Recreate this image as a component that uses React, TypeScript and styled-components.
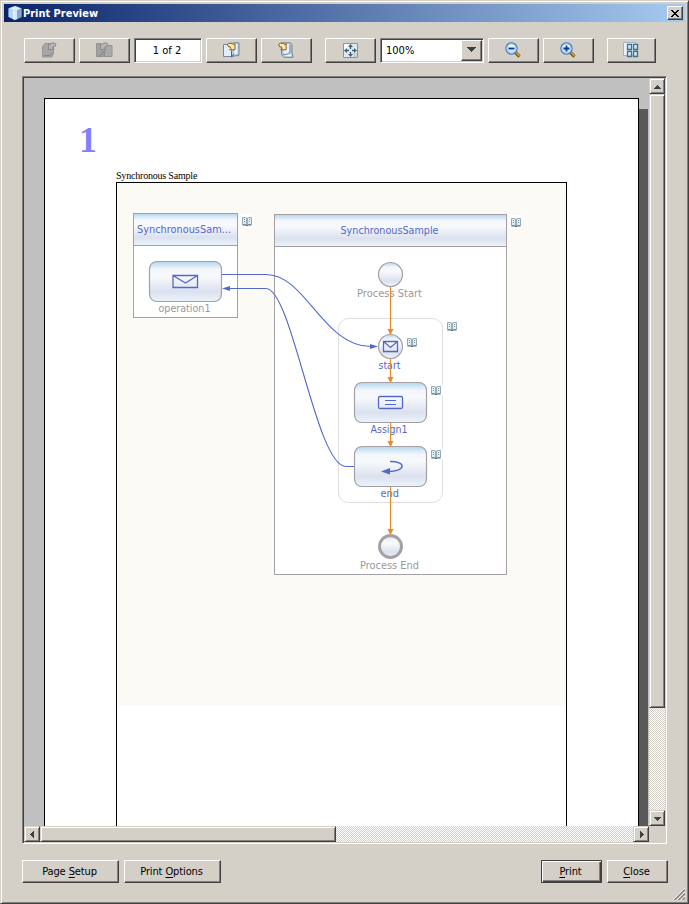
import React from 'react';
import styled, { createGlobalStyle, css } from 'styled-components';

const face = '#d4d0c8';
const ui = '"DejaVu Sans Condensed", "DejaVu Sans", "Noto Sans", sans-serif';
const blue = '#5468cc';
const orange = '#e78b24';
const edge = '#a5a0a6';

const Global = createGlobalStyle`
  *, *::before, *::after { box-sizing: border-box; }
  body { margin: 0; background: ${face}; overflow: hidden; }
  svg { display: block; }
`;

const raised = css`
  border: 1px solid;
  border-color: #fff #404040 #404040 #fff;
  box-shadow: inset -1px -1px 0 #808080;
`;
const sunken = css`
  border: 1px solid;
  border-color: #808080 #fff #fff #808080;
  box-shadow: inset 1px 1px 0 #404040, inset -1px -1px 0 ${face};
`;

const Dialog = styled.div`
  width: 689px;
  height: 904px;
  padding: 2px 2px 0 2px;
  background: ${face};
  border: 1px solid;
  border-color: ${face} #404040 #404040 ${face};
  box-shadow: inset 1px 1px 0 #fff, inset -1px -1px 0 #808080;
  font: 11px ${ui};
  color: #000;
  display: flex;
  flex-direction: column;
`;

const TitleBar = styled.header`
  height: 18px;
  margin: 1px 1px 0;
  padding: 0 2px 0 4px;
  display: flex;
  align-items: center;
  background: linear-gradient(90deg, #0a246a, #a6caf0);
  color: #fff;
`;

const Title = styled.div`
  flex: 1;
  margin-left: 1px;
  font-weight: bold;
  font-size: 11px;
  line-height: 18px;
  svg { overflow: visible; }
`;

const CloseBox = styled.button`
  ${raised}
  width: 16px;
  height: 14px;
  padding: 0;
  background: ${face};
  display: grid;
  place-items: center;
`;

const Toolbar = styled.div`
  margin: 16px 0 0 21px;
  height: 25px;
  display: flex;
  gap: 4px;
`;

const ToolButton = styled.button<{ $w?: number; $before?: number }>`
  border: 1px solid;
  border-color: #fff #404040 #404040 #fff;
  box-shadow: inset -1px -1px 0 #808080;
  width: ${(p) => p.$w ?? 51}px;
  height: 25px;
  margin-left: ${(p) => p.$before ?? 0}px;
  padding: 0 1px 1px 0;
  background: ${face};
  display: grid;
  place-items: center;
`;

const PageField = styled.div`
  ${sunken}
  width: 68px;
  height: 25px;
  padding-right: 2px;
  background: #fff;
  display: grid;
  place-items: center;
  line-height: 20px;
`;

const Combo = styled.div`
  ${sunken}
  width: 104px;
  height: 25px;
  padding: 0 1px 0 5px;
  background: #fff;
  display: flex;
  align-items: center;
  justify-content: space-between;
`;

const ComboArrow = styled.div`
  ${raised}
  width: 21px;
  height: 21px;
  padding-bottom: 2px;
  background: ${face};
  display: grid;
  place-items: center;
`;

const ScrollPane = styled.main`
  ${sunken}
  width: 645px;
  height: 768px;
  margin: 13px 0 0 19px;
  padding: 1px;
  display: grid;
  grid-template-columns: 625px 16px;
  grid-template-rows: 748px 16px;
  background: ${face};
`;

const Viewport = styled.div`
  overflow: hidden;
  background: #c0c0c0;
`;

const Paper = styled.article`
  width: 595px;
  height: 842px;
  margin: 20px 0 0 20px;
  padding: 26px 0 0 71px;
  border: 1px solid #000;
  background: #fff;
  box-shadow: 9px 11px 0 #595959;
`;

const PageNumber = styled.div`
  margin-left: -37px;
  height: 30px;
  font: bold 36px/30px "Liberation Serif", serif;
  color: #8080ff;
`;

const DocName = styled.div`
  height: 27px;
  padding-top: 15px;
  font: 10px/12px "Liberation Serif", serif;
  letter-spacing: -0.2px;
  white-space: nowrap;
`;

const Frame = styled.div`
  width: 451px;
  height: 700px;
  border: 1px solid #000;
`;

const Track = styled.div<{ $dir: 'row' | 'column' }>`
  display: flex;
  flex-direction: ${(p) => p.$dir};
  justify-content: space-between;
  background: repeating-conic-gradient(${face} 0 25%, #fff 0 50%) 0 0 / 2px 2px;
`;

const ThumbGroup = styled.div<{ $dir: 'row' | 'column' }>`
  display: flex;
  flex-direction: ${(p) => p.$dir};
`;

const scrollPart = css`
  border: 1px solid;
  border-color: ${face} #404040 #404040 ${face};
  box-shadow: inset 1px 1px 0 #fff, inset -1px -1px 0 #808080;
  background: ${face};
`;

const Arrow = styled.div`
  ${scrollPart}
  width: 16px;
  height: 16px;
  display: grid;
  place-items: center;
`;

const Thumb = styled.div<{ $w: number; $h: number }>`
  ${scrollPart}
  width: ${(p) => p.$w}px;
  height: ${(p) => p.$h}px;
`;

const Footer = styled.footer`
  height: 23px;
  margin: 16px 18px 0 19px;
  display: flex;
  justify-content: space-between;
`;

const Group = styled.div`
  display: flex;
  gap: 5px;
`;

const PushButton = styled.button<{ $w: number; $default?: boolean }>`
  ${raised}
  ${(p) =>
    p.$default &&
    css`
      border-color: #404040;
      box-shadow: inset 1px 1px 0 #fff, inset -1px -1px 0 #404040, inset -2px -2px 0 #808080;
    `}
  width: ${(p) => p.$w}px;
  height: 23px;
  padding: 1px 2px 0 0;
  background: ${face};
  color: #000;
  font: 11px/20px ${ui};
  letter-spacing: -0.12px;
  white-space: nowrap;
  u { text-underline-offset: 2px; text-decoration-thickness: 1px; }
`;

const GripRow = styled.div`
  height: 13px;
  margin-top: 5px;
  padding-right: 1px;
  display: flex;
  justify-content: flex-end;
`;

type Direction = 'up' | 'down' | 'left' | 'right';

const triangles: Record<Direction, string> = {
  up: 'M5 4h1v1h1v1h1v1h1v1H2V7h1V6h1V5h1z',
  down: 'M2 4h7v1H8v1H7v1H6v1H5V7H4V6H3V5H2z',
  left: 'M7 2v7H6V8H5V7H4V6H3V5h1V4h1V3h1V2z',
  right: 'M4 2v7h1V8h1V7h1V6h1V5H7V4H6V3H5V2z',
};

function Triangle({ dir }: { dir: Direction }) {
  return (
    <svg width="11" height="11" viewBox="0 0 11 11" shapeRendering="crispEdges">
      <path d={triangles[dir]} fill="#404040" />
    </svg>
  );
}

function ComboTriangle() {
  return (
    <svg width="9" height="5" viewBox="0 0 9 5" shapeRendering="crispEdges">
      <path d="M0 0h9v1H8v1H7v1H6v1H5v1H4V4H3V3H2V2H1V1H0z" fill="#404040" />
    </svg>
  );
}

function Cube() {
  return (
    <svg width="14" height="16" viewBox="0 0 14 16">
      <path d="M7 .8 13.600 3.300v8.700L7 15.200.4 12V3.300z" fill="#8fb0d8" />
      <path d="M7 1.200 13 3.500 7 6 1 3.500z" fill="#d9eefa" />
      <path d="M.8 3.800 7 6v8.800L.8 11.800z" fill="#b4d6f4" />
      <path d="M7 6l6.200-2.200v8L7 14.800z" fill="#8ba6d2" />
      <path d="M5 5.300l2 .7 2-.7v8.600l-2 .9-2-.9z" fill="#eef9ff" opacity=".75" />
    </svg>
  );
}

const pointer = 'M.5 1.500 2 .5h3l1.500 1.500L8 1v6H2.500L4 5.500 3 4H1.500z';

function FirstPageIcon() {
  return (
    <svg width="16" height="16" viewBox="0 0 16 16">
      <path d="M1.500 15V4.500L4 1.500h8.500v9.500l-1.500 4z" fill="#a6a6a6" stroke="#979797" />
      <path d="M3 13.500h5.500l3-2.500" fill="none" stroke="#858585" />
      <path d={pointer} transform="translate(15.500 .5) scale(-1 1)" fill="#b4b4b4" stroke="#8a8a8a" />
    </svg>
  );
}

function PrevPageIcon() {
  return (
    <svg width="17" height="16" viewBox="0 0 17 16">
      <path d="M.5 1.500h4l2.500 2v11H.5z" fill="#a2a2a2" stroke="#949494" />
      <path d="M8.500 3.500h7.500v11H8.500z" fill="#a9a9a9" stroke="#949494" />
      <path d="M1.500 14.500 5 13l3-4v6" fill="none" stroke="#858585" />
      <path d={pointer} transform="translate(12.500 .5) scale(-1 1)" fill="#b4b4b4" stroke="#8a8a8a" />
    </svg>
  );
}

function NextPageIcon() {
  return (
    <svg width="17" height="16" viewBox="0 0 17 16">
      <path d="M.5 2.500h8v12h-8z" fill="#e3eef8" stroke="#71879b" />
      <path d="M8.500 3 10 .8h6v12.700l-5 .5-2.500 1z" fill="#b5cce0" stroke="#71879b" />
      <path d="M12 1.800h2.500v9.700L11 12.500z" fill="#e6f1fa" />
      <path d="M8.500 9.500v5.500l2.500-3" fill="none" stroke="#4f6376" />
      <path d={pointer} transform="translate(4 .8)" fill="#ffe7a5" stroke="#80602a" />
    </svg>
  );
}

function LastPageIcon() {
  return (
    <svg width="16" height="16" viewBox="0 0 16 16">
      <path d="M3.500.800h9l1.500 2v8l1.200 4.500H6l-2.500-3z" fill="#b1c8dc" stroke="#71879b" />
      <path d="M5.500 2h5.500v8L9 11.500H5.500z" fill="#e7f2fa" />
      <path d="M5 14.300h8.500v-2l-4.500.5z" fill="#edf5fb" />
      <path d="M5 12.500h4l3-2V3" fill="none" stroke="#8399ac" />
      <path d={pointer} transform="translate(.2 .8)" fill="#ffe7a5" stroke="#80602a" />
    </svg>
  );
}

function FitIcon() {
  return (
    <svg width="15" height="15" viewBox="0 0 15 15">
      <path d="M.5.500h14v14H.5z" fill="#dfe9f3" stroke="#8494a6" />
      <path d="M1 1h5v3L4 6H1z" fill="#fafdff" />
      <path d="M10 10h4v4h-4z" fill="#c3d3e2" />
      <path d="M7.500 1 10 4H8.200v2H6.800V4H5zM7.500 14 10 11H8.200V9H6.800v2H5zM1 7.500 4 5v1.800h2v1.400H4V10zM14 7.500 11 5v1.800H9v1.400h2V10z" fill="#46627a" />
    </svg>
  );
}

function ZoomIcon({ plus }: { plus?: boolean }) {
  return (
    <svg width="16" height="16" viewBox="0 0 16 16">
      <path d="M10.500 10.500l4 4" stroke="#765019" strokeWidth="3.200" />
      <path d="M10.800 10.200l3.700 3.700" stroke="#e0a52c" strokeWidth="1.500" />
      <circle cx="6.500" cy="6.500" r="5.600" fill="#cfe6ff" stroke="#3f78c0" strokeWidth="1.200" />
      <circle cx="6.500" cy="6.500" r="4.500" fill="none" stroke="#a7cdf5" />
      <path d="M3 5.500a3.600 3.600 0 0 1 7 0z" fill="#f6fbff" />
      <path d={plus ? 'M3.500 6.500h6M6.500 3.500v6' : 'M3.500 6.500h6'} stroke="#0f3690" strokeWidth="1.800" />
    </svg>
  );
}

function MultiPageIcon() {
  return (
    <svg width="16" height="16" viewBox="0 0 16 16">
      <path d="M.5.500h12v13H.5z" fill="#e9f1fa" stroke="#9fb2c8" />
      <path d="M4.500 2.500h4v5h-4zM10.500 2.500h4v5h-4zM4.500 9.500h4v5h-4zM10.500 9.500h4v5h-4z" fill="#c3e4f3" stroke="#44718a" strokeWidth="1.300" />
      <path d="M5.500 4h2M11.500 4h2M5.500 11h2M11.500 11h2" stroke="#f0fbff" />
    </svg>
  );
}

function Book({ x, y }: { x: number; y: number }) {
  return (
    <g transform={`translate(${x} ${y})`}>
      <rect x="-2" y="-3" width="14" height="14" rx="3" fill="#fff" />
      <path d="M.5.500h3L5 1.500 6.500.500h3v7h-3L5 8.500 3.500 7.500h-3z" fill="#e0edf1" stroke="#93a8b3" />
      <path d="M5 1.500v7M.5 8h3l1.500.8L6.500 8h3" fill="none" stroke="#566e80" />
      <path d="M2 2.500h1M2 4.500h1M7 2.500h1M7 4.500h1" stroke="#8097a3" />
    </g>
  );
}

function Label({ x, y, w, color = blue, children }: {
  x: number; y: number; w: number; color?: string; children: string;
}) {
  return (
    <text x={x} y={y} textLength={w} lengthAdjust="spacingAndGlyphs" fill={color} fontSize="11">
      {children}
    </text>
  );
}

function Activity({ x, y }: { x: number; y: number }) {
  return <rect x={x} y={y} width="72" height="40" rx="7.500" fill="url(#node)" stroke={edge} strokeWidth="1.200" />;
}

function Flow({ y1, y2 }: { y1: number; y2: number }) {
  return (
    <>
      <path d={`M390.500 ${y1}V${y2}`} stroke={orange} strokeWidth="1.200" />
      <path d={`M387.500 ${y2 - 5}h6l-3 6z`} fill={orange} />
    </>
  );
}

function ProcessDiagram() {
  return (
    <svg width="449" height="523" viewBox="117 183 449 523" fontFamily={ui.replace(/"/g, "'")}>
      <defs>
        <linearGradient id="node" x1="0" y1="0" x2="0" y2="1">
          <stop offset="0" stopColor="#b4d4ee" />
          <stop offset=".07" stopColor="#cbe2f3" />
          <stop offset=".2" stopColor="#f3f7fb" />
          <stop offset=".38" stopColor="#f8f9fc" />
          <stop offset=".75" stopColor="#dbe1ee" />
          <stop offset="1" stopColor="#eaf4fb" />
        </linearGradient>
      </defs>
      <rect x="117" y="183" width="449" height="523" fill="#fbfaf5" />

      <rect x="133.500" y="213.500" width="104" height="104" fill="#fff" stroke={edge} />
      <rect x="133.500" y="213.500" width="104" height="32" fill="url(#node)" stroke={edge} />
      <rect x="274.500" y="214.500" width="232" height="360" fill="#fff" stroke={edge} />
      <rect x="274.500" y="214.500" width="232" height="32" fill="url(#node)" stroke={edge} />
      <Label x={137} y={233} w={94}>SynchronousSam...</Label>
      <Label x={340.500} y={234} w={98}>SynchronousSample</Label>

      <Book x={242} y={217} />
      <Book x={511} y={218} />

      <rect x="338.500" y="318.500" width="104" height="184" rx="10" fill="none" stroke="#dedede" />
      <Book x={447} y={322} />
      <Book x={407} y={338} />
      <Book x={431} y={386} />
      <Book x={431} y={450} />

      <Activity x={149.500} y={261.500} />
      <Activity x={354.500} y={382.500} />
      <Activity x={354.500} y={446.500} />
      <circle cx="390.500" cy="274.500" r="12" fill="url(#node)" stroke={edge} strokeWidth="1.200" />
      <circle cx="390.500" cy="346.500" r="12" fill="url(#node)" stroke={edge} strokeWidth="1.200" />
      <circle cx="390.500" cy="546.500" r="11" fill="url(#node)" stroke={edge} strokeWidth="3" />

      <Label x={158.500} y={312} w={52} color="#999">operation1</Label>
      <Label x={357} y={297} w={65} color="#999">Process Start</Label>
      <Label x={378.500} y={369} w={22}>start</Label>
      <Label x={370.500} y={433} w={37}>Assign1</Label>
      <Label x={380.500} y={497} w={18.500}>end</Label>
      <Label x={360} y={569} w={59} color="#999">Process End</Label>

      <g fill="none" stroke={blue} strokeWidth="1.100">
        <path d="M222 274.500H266C306 274.500 323 346.500 371 346.500" />
        <path d="M230 288.500H266C292 288.500 316 466.500 346 466.500H354" />
        <path d="M173 275.500h24.500v12H173zM173 275.500l12.500 7.500 12-7.500" strokeWidth="1.300" />
        <path d="M383.500 341.500h14v10h-14zM383.500 341.500l7 6 7-6" strokeWidth="1.300" />
        <rect x="378.500" y="396.500" width="24" height="12" rx="1.500" strokeWidth="1.300" />
        <path d="M385 400.500h11M385 404.500h11" />
        <path d="M390 461.500C406 461 407 471.500 388 471.500" strokeWidth="1.400" />
      </g>
      <path d="M378 346.500l-8-2.500v5zM222 288.500l8-2.500v5zM381 471.500l9-3.500v6.500z" fill={blue} />

      <Flow y1={287} y2={334} />
      <Flow y1={359} y2={382} />
      <Flow y1={423} y2={446} />
      <Flow y1={487} y2={534} />
    </svg>
  );
}

export default function App() {
  return (
    <>
      <Global />
      <Dialog>
        <TitleBar>
          <Cube />
          <Title>
            <svg width="80" height="18">
              <text x="0" y="13" textLength="75" lengthAdjust="spacingAndGlyphs" fill="#fff">Print Preview</text>
            </svg>
          </Title>
          <CloseBox aria-label="Close window">
            <svg width="8" height="7" viewBox="0 0 8 7" shapeRendering="crispEdges">
              <path d="M0 0h2v1h1v1h2V1h1V0h2v1H7v1H6v1H5v1h1v1h1v1h1v1H6V6H5V5H3v1H2v1H0V6h1V5h1V4h1V3H2V2H1V1H0z" />
            </svg>
          </CloseBox>
        </TitleBar>

        <Toolbar>
          <ToolButton disabled><FirstPageIcon /></ToolButton>
          <ToolButton disabled><PrevPageIcon /></ToolButton>
          <PageField>1 of 2</PageField>
          <ToolButton><NextPageIcon /></ToolButton>
          <ToolButton><LastPageIcon /></ToolButton>
          <ToolButton $before={9}><FitIcon /></ToolButton>
          <Combo>
            100%
            <ComboArrow><ComboTriangle /></ComboArrow>
          </Combo>
          <ToolButton><ZoomIcon /></ToolButton>
          <ToolButton><ZoomIcon plus /></ToolButton>
          <ToolButton $before={9} $w={49}><MultiPageIcon /></ToolButton>
        </Toolbar>

        <ScrollPane>
          <Viewport>
            <Paper>
              <PageNumber>1</PageNumber>
              <DocName>Synchronous Sample</DocName>
              <Frame><ProcessDiagram /></Frame>
            </Paper>
          </Viewport>
          <Track $dir="column">
            <ThumbGroup $dir="column">
              <Arrow><Triangle dir="up" /></Arrow>
              <Thumb $w={16} $h={614} />
            </ThumbGroup>
            <Arrow><Triangle dir="down" /></Arrow>
          </Track>
          <Track $dir="row">
            <ThumbGroup $dir="row">
              <Arrow><Triangle dir="left" /></Arrow>
              <Thumb $w={296} $h={16} />
            </ThumbGroup>
            <Arrow><Triangle dir="right" /></Arrow>
          </Track>
        </ScrollPane>

        <Footer>
          <Group>
            <PushButton $w={97}>Page <u>S</u>etup</PushButton>
            <PushButton $w={97}>Print <u>O</u>ptions</PushButton>
          </Group>
          <Group>
            <PushButton $w={61} $default><u>P</u>rint</PushButton>
            <PushButton $w={61}><u>C</u>lose</PushButton>
          </Group>
        </Footer>
        <GripRow>
          <svg width="12" height="12" viewBox="0 0 12 12">
            <path d="M0 12 12 0M4 12l8-8M8 12l4-4" stroke="#fff" />
            <path d="M1.500 12 12 1.500M5.500 12 12 5.500M9.500 12 12 9.500" stroke="#808080" strokeWidth="1.500" />
          </svg>
        </GripRow>
      </Dialog>
    </>
  );
}
